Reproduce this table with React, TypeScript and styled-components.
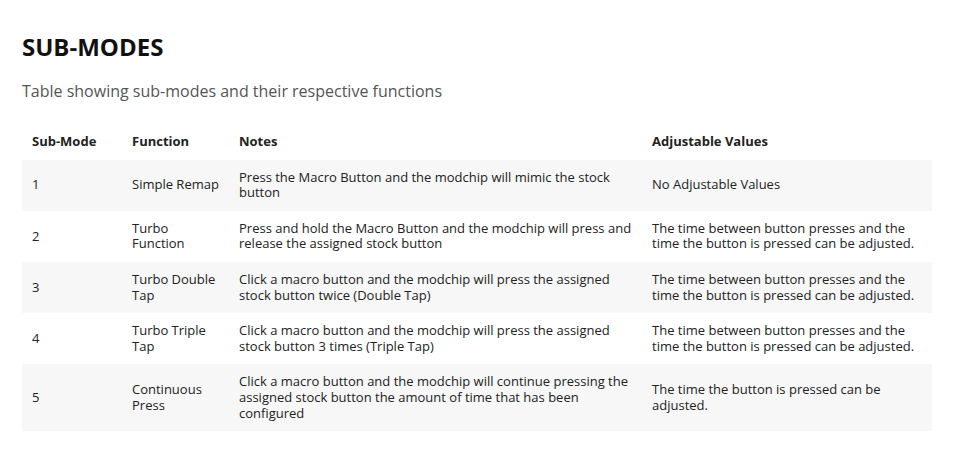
import { FC, ReactElement } from 'react';
import styled, { createGlobalStyle } from 'styled-components';

const GlobalStyle = createGlobalStyle`
  body {
    margin: 0;
    background: #ffffff;
    font-family: 'Open Sans', 'Noto Sans', sans-serif;
  }
`;

const Page = styled.main`
  padding: 30px 31px 0 22px;
`;

const Title = styled.h2`
  margin: 0;
  font-size: 24px;
  line-height: 34px;
  font-weight: 700;
  color: #111111;
`;

const Caption = styled.p`
  margin: 16px 0 24px;
  font-size: 16px;
  line-height: 22px;
  color: #555555;
`;

const Table = styled.table`
  width: 100%;
  table-layout: fixed;
  border-collapse: collapse;
  font-size: 13px;
  line-height: 15.6px;
  color: #222222;

  tbody tr:nth-child(odd) {
    background: #f7f7f7;
  }
`;

const Col = styled.col<{ $width?: number }>`
  width: ${(p) => (p.$width ? `${p.$width}px` : 'auto')};
`;

const HeadCell = styled.th`
  text-align: left;
  font-weight: 700;
  padding: 7.5px 10px 10.5px;
`;

const Cell = styled.td`
  padding: 10px 10px;
  vertical-align: middle;
`;

interface SubMode {
  id: number;
  name: string;
  notes: string;
  values: string;
}

const rows: SubMode[] = [
  {
    id: 1,
    name: 'Simple Remap',
    notes: 'Press the Macro Button and the modchip will mimic the stock button',
    values: 'No Adjustable Values',
  },
  {
    id: 2,
    name: 'Turbo Function',
    notes:
      'Press and hold the Macro Button and the modchip will press and release the assigned stock button',
    values:
      'The time between button presses and the time the button is pressed can be adjusted.',
  },
  {
    id: 3,
    name: 'Turbo Double Tap',
    notes:
      'Click a macro button and the modchip will press the assigned stock button twice (Double Tap)',
    values:
      'The time between button presses and the time the button is pressed can be adjusted.',
  },
  {
    id: 4,
    name: 'Turbo Triple Tap',
    notes:
      'Click a macro button and the modchip will press the assigned stock button 3 times (Triple Tap)',
    values:
      'The time between button presses and the time the button is pressed can be adjusted.',
  },
  {
    id: 5,
    name: 'Continuous Press',
    notes:
      'Click a macro button and the modchip will continue pressing the assigned stock button the amount of time that has been configured',
    values: 'The time the button is pressed can be adjusted.',
  },
];

const App: FC = (): ReactElement => {
  return (
    <>
      <GlobalStyle />
      <Page>
        <Title>SUB-MODES</Title>
        <Caption>Table showing sub-modes and their respective functions</Caption>
        <Table>
          <colgroup>
            <Col $width={100} />
            <Col $width={107} />
            <Col $width={413} />
            <Col />
          </colgroup>
          <thead>
            <tr>
              <HeadCell>Sub-Mode</HeadCell>
              <HeadCell>Function</HeadCell>
              <HeadCell>Notes</HeadCell>
              <HeadCell>Adjustable Values</HeadCell>
            </tr>
          </thead>
          <tbody>
            {rows.map((r) => (
              <tr key={r.id}>
                <Cell>{r.id}</Cell>
                <Cell>{r.name}</Cell>
                <Cell>{r.notes}</Cell>
                <Cell>{r.values}</Cell>
              </tr>
            ))}
          </tbody>
        </Table>
      </Page>
    </>
  );
};

export default App;
